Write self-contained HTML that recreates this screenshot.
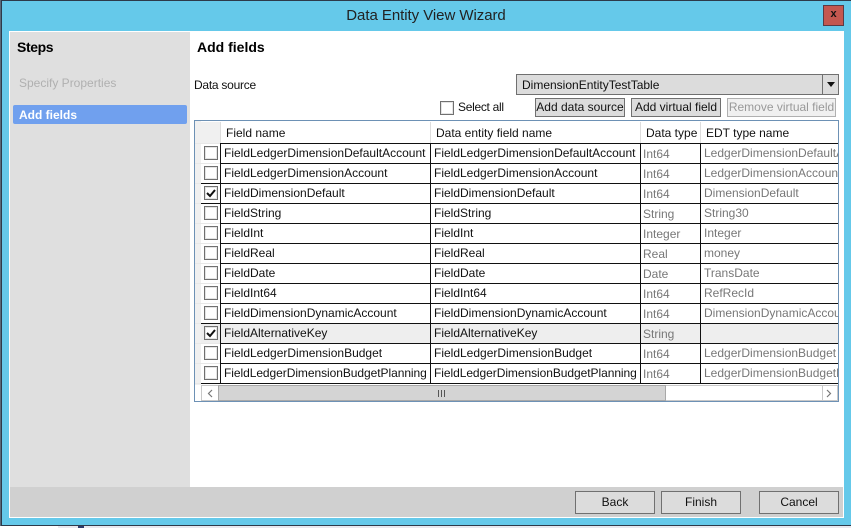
<!DOCTYPE html>
<html><head><meta charset="utf-8"><style>
html,body{margin:0;padding:0;width:851px;height:528px;overflow:hidden;background:#e8e8ef}
*{box-sizing:border-box}
body{font:12px "Liberation Sans",sans-serif;color:#111;position:relative}
div,span{position:absolute;white-space:nowrap}
.btn{background:#dcdcdc;border:1px solid #707070;text-align:center;height:23px;line-height:20px}
.sb{height:19px;line-height:17px}
.cb{width:14px;height:14px;border:1px solid #707070;background:#fff;left:204px;box-shadow:inset 0 0 0 1px #e4e4e4}
.cb svg{position:absolute;left:0;top:0}
.t{height:20px;line-height:19px}
.g{color:#777}
.h{height:1px;left:220px;width:618px;background:#111}
.l{height:1px;left:195px;width:25px;background:#e8e8e8}
.k{height:1px;left:201px;width:19px;background:#111}
.v{width:1px;background:#111;top:143px;height:241px}
</style></head><body>
<div style="left:0;top:526px;width:58px;height:2px;background:#fff"></div>
<div style="left:78px;top:526px;width:6px;height:2px;background:#2d3a6a"></div>
<div style="left:1px;top:0;width:850px;height:526px;background:#65c9ea;border:1px solid #2d3a4a;border-right:0"></div>
<div style="left:0;top:0;width:1px;height:526px;background:#5a6a7a"></div>
<div style="left:1px;top:0;width:850px;height:31px;text-align:center;line-height:31px;font-size:15px;color:#222;letter-spacing:-.05px">Data Entity View Wizard</div>
<div style="left:823px;top:5px;width:21px;height:21px;background:#c4574f;border:1px solid #5b3a44;text-align:center;line-height:17px;font-weight:bold;font-size:11px;color:#111">x</div>
<div style="left:9px;top:31px;width:835px;height:487px;background:#fff"></div>
<div style="left:10px;top:32px;width:180px;height:455px;background:#dfdfdf"></div>
<div style="left:10px;top:487px;width:833px;height:30px;background:#d0d0d0"></div>
<div style="left:17px;top:39px;font-weight:bold;font-size:14px;color:#000;letter-spacing:-.4px">Steps</div>
<div style="left:19px;top:76px;color:#b0b0b0">Specify Properties</div>
<div style="left:13px;top:105px;width:174px;height:19px;background:#70a0ee;border-radius:2px"></div>
<div style="left:19px;top:108px;color:#fff;font-weight:bold">Add fields</div>
<div style="left:197px;top:39px;font-weight:bold;font-size:14px;color:#000">Add fields</div>
<div style="left:194px;top:78px;letter-spacing:-.25px">Data source</div>
<div style="left:516px;top:74px;width:323px;height:21px;background:#dcdcdc;border:1px solid #707070;line-height:20px;padding-left:5px">DimensionEntityTestTable<div style="left:305px;top:0;width:1px;height:19px;background:#707070"></div><div style="left:310px;top:7px;width:0;height:0;border:4px solid transparent;border-top:5px solid #111;border-bottom:0"></div></div>
<div class="cb" style="left:440px;top:101px"></div>
<div style="left:458px;top:100px;letter-spacing:-.3px">Select all</div>
<div class="btn sb" style="left:535px;top:98px;width:90px">Add data source</div>
<div class="btn sb" style="left:631px;top:98px;width:90px">Add virtual field</div>
<div class="btn sb" style="left:727px;top:98px;width:109px;background:#f0f0f0;border-color:#b0b0b0;color:#999">Remove virtual field</div>

<div style="left:194px;top:120px;width:645px;height:282px;border:1px solid #6d91b5;background:#fff"></div>
<div style="left:195px;top:121px;width:6px;height:264px;background:#f0f0f0"></div>
<div style="left:201px;top:122px;width:19px;height:21px;background:#f0f0f0"></div>
<div style="left:201px;top:323px;width:637px;height:20px;background:#eee"></div>
<div style="left:226px;top:126px">Field name</div>
<div style="left:436px;top:126px">Data entity field name</div>
<div style="left:646px;top:126px">Data type</div>
<div style="left:706px;top:126px">EDT type name</div>
<div style="left:220px;top:122px;width:1px;height:21px;background:#ddd"></div>
<div style="left:430px;top:122px;width:1px;height:21px;background:#ddd"></div>
<div style="left:640px;top:122px;width:1px;height:21px;background:#ddd"></div>
<div style="left:700px;top:122px;width:1px;height:21px;background:#ddd"></div>

<div class="l" style="top:143px"></div><div class="l" style="top:163px"></div><div class="l" style="top:183px"></div><div class="l" style="top:203px"></div><div class="l" style="top:223px"></div><div class="l" style="top:243px"></div><div class="l" style="top:263px"></div><div class="l" style="top:283px"></div><div class="l" style="top:303px"></div><div class="l" style="top:323px"></div><div class="l" style="top:343px"></div><div class="l" style="top:363px"></div><div class="l" style="top:383px"></div>
<div class="k" style="top:183px"></div><div class="k" style="top:203px"></div><div class="k" style="top:323px"></div><div class="k" style="top:383px"></div>
<div class="h" style="top:143px"></div><div class="h" style="top:163px"></div><div class="h" style="top:183px"></div><div class="h" style="top:203px"></div><div class="h" style="top:223px"></div><div class="h" style="top:243px"></div><div class="h" style="top:263px"></div><div class="h" style="top:283px"></div><div class="h" style="top:303px"></div><div class="h" style="top:323px"></div><div class="h" style="top:343px"></div><div class="h" style="top:363px"></div><div class="h" style="top:383px"></div>
<div class="v" style="left:220px"></div><div class="v" style="left:430px"></div><div class="v" style="left:640px"></div><div class="v" style="left:700px"></div>

<div class="cb" style="top:146px"></div><div class="t" style="left:224px;top:144px">FieldLedgerDimensionDefaultAccount</div><div class="t" style="left:434px;top:144px">FieldLedgerDimensionDefaultAccount</div><div class="t g" style="left:643px;top:145px">Int64</div><div class="t g" style="left:704px;top:144px;width:134px;overflow:hidden">LedgerDimensionDefaultAccount</div>
<div class="cb" style="top:166px"></div><div class="t" style="left:224px;top:164px">FieldLedgerDimensionAccount</div><div class="t" style="left:434px;top:164px">FieldLedgerDimensionAccount</div><div class="t g" style="left:643px;top:165px">Int64</div><div class="t g" style="left:704px;top:164px;width:134px;overflow:hidden">LedgerDimensionAccount</div>
<div class="cb" style="top:186px"><svg width="12" height="12"><path d="M2 6l3 3 5-6" fill="none" stroke="#111" stroke-width="2"/></svg></div><div class="t" style="left:224px;top:184px">FieldDimensionDefault</div><div class="t" style="left:434px;top:184px">FieldDimensionDefault</div><div class="t g" style="left:643px;top:185px">Int64</div><div class="t g" style="left:704px;top:184px">DimensionDefault</div>
<div class="cb" style="top:206px"></div><div class="t" style="left:224px;top:204px">FieldString</div><div class="t" style="left:434px;top:204px">FieldString</div><div class="t g" style="left:643px;top:205px">String</div><div class="t g" style="left:704px;top:204px">String30</div>
<div class="cb" style="top:226px"></div><div class="t" style="left:224px;top:224px">FieldInt</div><div class="t" style="left:434px;top:224px">FieldInt</div><div class="t g" style="left:643px;top:225px">Integer</div><div class="t g" style="left:704px;top:224px">Integer</div>
<div class="cb" style="top:246px"></div><div class="t" style="left:224px;top:244px">FieldReal</div><div class="t" style="left:434px;top:244px">FieldReal</div><div class="t g" style="left:643px;top:245px">Real</div><div class="t g" style="left:704px;top:244px">money</div>
<div class="cb" style="top:266px"></div><div class="t" style="left:224px;top:264px">FieldDate</div><div class="t" style="left:434px;top:264px">FieldDate</div><div class="t g" style="left:643px;top:265px">Date</div><div class="t g" style="left:704px;top:264px">TransDate</div>
<div class="cb" style="top:286px"></div><div class="t" style="left:224px;top:284px">FieldInt64</div><div class="t" style="left:434px;top:284px">FieldInt64</div><div class="t g" style="left:643px;top:285px">Int64</div><div class="t g" style="left:704px;top:284px">RefRecId</div>
<div class="cb" style="top:306px"></div><div class="t" style="left:224px;top:304px">FieldDimensionDynamicAccount</div><div class="t" style="left:434px;top:304px">FieldDimensionDynamicAccount</div><div class="t g" style="left:643px;top:305px">Int64</div><div class="t g" style="left:704px;top:304px;width:134px;overflow:hidden">DimensionDynamicAccount</div>
<div class="cb" style="top:326px"><svg width="12" height="12"><path d="M2 6l3 3 5-6" fill="none" stroke="#111" stroke-width="2"/></svg></div><div class="t" style="left:224px;top:324px">FieldAlternativeKey</div><div class="t" style="left:434px;top:324px">FieldAlternativeKey</div><div class="t g" style="left:643px;top:325px">String</div>
<div class="cb" style="top:346px"></div><div class="t" style="left:224px;top:344px">FieldLedgerDimensionBudget</div><div class="t" style="left:434px;top:344px">FieldLedgerDimensionBudget</div><div class="t g" style="left:643px;top:345px">Int64</div><div class="t g" style="left:704px;top:344px;width:134px;overflow:hidden">LedgerDimensionBudget</div>
<div class="cb" style="top:366px"></div><div class="t" style="left:224px;top:364px;letter-spacing:-.06px">FieldLedgerDimensionBudgetPlanning</div><div class="t" style="left:434px;top:364px;letter-spacing:-.06px">FieldLedgerDimensionBudgetPlanning</div><div class="t g" style="left:643px;top:365px">Int64</div><div class="t g" style="left:704px;top:364px;width:134px;overflow:hidden">LedgerDimensionBudgetPlanning</div>

<div style="left:201px;top:385px;width:637px;height:16px;background:#fff;border:1px solid #c8c8c8"></div>
<div style="left:218px;top:385px;width:448px;height:16px;background:#d4d4d4;border:1px solid #a8a8a8"></div>
<div style="left:822px;top:385px;width:1px;height:16px;background:#c8c8c8"></div>
<svg style="position:absolute;left:0;top:0" width="851" height="528"><path d="M212 390l-3.500 3.500 3.500 3.500M827 390l3.500 3.500-3.500 3.500" fill="none" stroke="#777" stroke-width="1.200"/><path d="M438.500 390v7M441.500 390v7M444.500 390v7" stroke="#555"/></svg>

<div class="btn" style="left:575px;top:491px;width:80px">Back</div>
<div class="btn" style="left:661px;top:491px;width:80px">Finish</div>
<div class="btn" style="left:759px;top:491px;width:80px">Cancel</div>
</body></html>
